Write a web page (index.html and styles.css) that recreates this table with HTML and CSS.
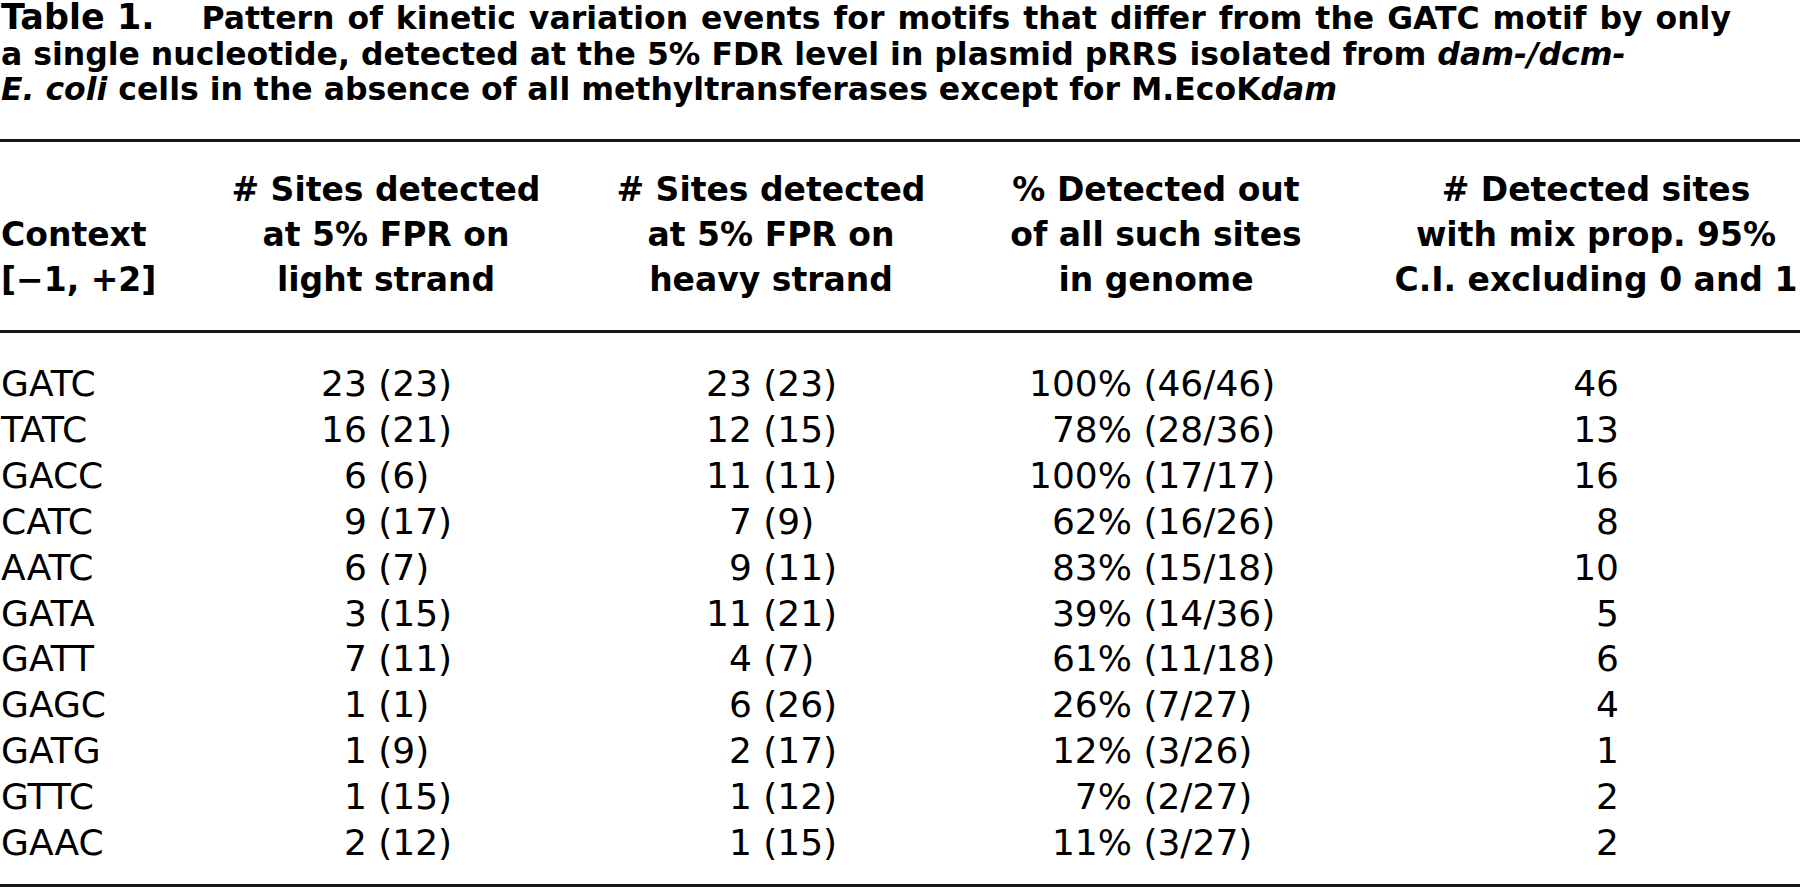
FILE: index.html
```html
<!DOCTYPE html>
<html lang="en">
<head>
<meta charset="utf-8">
<title>Table 1</title>
<link rel="stylesheet" href="styles.css">
</head>
<body>
<div class="page">
  <p class="caption"><span class="label">Table 1.</span><span class="gap"></span><span class="first">Pattern of kinetic variation events for motifs that differ from the GATC motif by only</span><br>a single nucleotide, detected at the 5% FDR level in plasmid pRRS isolated from <i>dam-/dcm-</i><br><i>E. coli</i> cells in the absence of all methyltransferases except for M.EcoK<i>dam</i></p>
  <table class="data">
    <colgroup>
      <col class="c1"><col class="c2"><col class="c3"><col class="c4"><col class="c5">
    </colgroup>
    <thead>
      <tr>
        <th class="ctx">Context<br>[&minus;1, +2]</th>
        <th># Sites detected<br>at 5% FPR on<br>light strand</th>
        <th># Sites detected<br>at 5% FPR on<br>heavy strand</th>
        <th>% Detected out<br>of all such sites<br>in genome</th>
        <th class="last"># Detected sites<br>with mix prop. 95%<br>C.I. excluding 0 and 1</th>
      </tr>
    </thead>
    <tbody>
      <tr><td class="ctx">GATC</td><td class="a"><span class="n">23</span> (23)</td><td class="b"><span class="n">23</span> (23)</td><td class="p"><span class="n">100%</span> (46/46)</td><td class="r">46</td></tr>
      <tr><td class="ctx">TATC</td><td class="a"><span class="n">16</span> (21)</td><td class="b"><span class="n">12</span> (15)</td><td class="p"><span class="n">78%</span> (28/36)</td><td class="r">13</td></tr>
      <tr><td class="ctx">GACC</td><td class="a"><span class="n">6</span> (6)</td><td class="b"><span class="n">11</span> (11)</td><td class="p"><span class="n">100%</span> (17/17)</td><td class="r">16</td></tr>
      <tr><td class="ctx">CATC</td><td class="a"><span class="n">9</span> (17)</td><td class="b"><span class="n">7</span> (9)</td><td class="p"><span class="n">62%</span> (16/26)</td><td class="r">8</td></tr>
      <tr><td class="ctx">AATC</td><td class="a"><span class="n">6</span> (7)</td><td class="b"><span class="n">9</span> (11)</td><td class="p"><span class="n">83%</span> (15/18)</td><td class="r">10</td></tr>
      <tr><td class="ctx">GATA</td><td class="a"><span class="n">3</span> (15)</td><td class="b"><span class="n">11</span> (21)</td><td class="p"><span class="n">39%</span> (14/36)</td><td class="r">5</td></tr>
      <tr><td class="ctx">GATT</td><td class="a"><span class="n">7</span> (11)</td><td class="b"><span class="n">4</span> (7)</td><td class="p"><span class="n">61%</span> (11/18)</td><td class="r">6</td></tr>
      <tr><td class="ctx">GAGC</td><td class="a"><span class="n">1</span> (1)</td><td class="b"><span class="n">6</span> (26)</td><td class="p"><span class="n">26%</span> (7/27)</td><td class="r">4</td></tr>
      <tr><td class="ctx">GATG</td><td class="a"><span class="n">1</span> (9)</td><td class="b"><span class="n">2</span> (17)</td><td class="p"><span class="n">12%</span> (3/26)</td><td class="r">1</td></tr>
      <tr><td class="ctx">GTTC</td><td class="a"><span class="n">1</span> (15)</td><td class="b"><span class="n">1</span> (12)</td><td class="p"><span class="n">7%</span> (2/27)</td><td class="r">2</td></tr>
      <tr><td class="ctx">GAAC</td><td class="a"><span class="n">2</span> (12)</td><td class="b"><span class="n">1</span> (15)</td><td class="p"><span class="n">11%</span> (3/27)</td><td class="r">2</td></tr>
    </tbody>
  </table>
</div>
</body>
</html>
```

FILE: styles.css
```css
html, body {
  margin: 0;
  padding: 0;
  background: #ffffff;
  overflow: hidden;
}

.page {
  width: 1800px;
  color: #000;
  font-family: "DejaVu Sans", "Liberation Sans", sans-serif;
}

.caption {
  margin: 0;
  padding-left: 1px;
  font-size: 31.5px;
  line-height: 35.5px;
  font-weight: bold;
  white-space: nowrap;
}

.caption .label {
  font-size: 35px;
}

.caption .gap {
  display: inline-block;
  width: 47px;
}

.caption .first {
  word-spacing: 2px;
}

.data {
  margin-top: 31px;
  width: 1800px;
  table-layout: fixed;
  border-collapse: collapse;
  border-top: 3px solid #151515;
  border-bottom: 3px solid #151515;
}

.c1 { width: 196px; }
.c2 { width: 380px; }
.c3 { width: 390px; }
.c4 { width: 380px; }
.c5 { width: 454px; }

.data th {
  font-size: 33px;
  font-weight: bold;
  line-height: 45px;
  text-align: center;
  vertical-align: bottom;
  white-space: nowrap;
  padding: 25px 0 28px 0;
  border-bottom: 3px solid #151515;
}

.data th.ctx {
  text-align: left;
  padding-left: 1px;
}

.data th.last {
  padding-left: 46px;
}

.data td {
  font-size: 36px;
  line-height: 45.9px;
  padding: 0;
  white-space: nowrap;
  vertical-align: baseline;
}

.data tbody tr:first-child td {
  padding-top: 28.5px;
}

.data tbody tr:last-child td {
  padding-bottom: 18px;
}

.data td.ctx {
  padding-left: 1px;
}

.n {
  display: inline-block;
  text-align: right;
}

.data td.a { padding-left: 125px; }
.data td.a .n { width: 2ch; }

.data td.b { padding-left: 130px; }
.data td.b .n { width: 2ch; }

.data td.p { padding-left: 63px; }
.data td.p .n { width: 2.86em; }

.data td.r {
  text-align: right;
  padding-right: 181px;
}
```
